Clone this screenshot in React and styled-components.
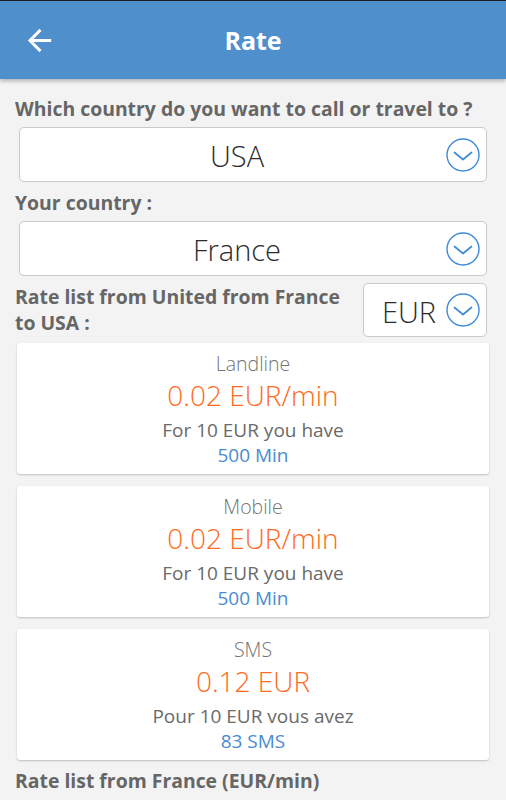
import React from "react";
import styled, { createGlobalStyle } from "styled-components";

const GlobalStyle = createGlobalStyle`
  html, body { margin: 0; padding: 0; }
  body {
    background: #f3f3f3;
    font-family: "Open Sans", "Liberation Sans", sans-serif;
    -webkit-font-smoothing: antialiased;
  }
`;

const Page = styled.div`
  width: 506px;
  min-height: 800px;
  background: #f3f3f3;
  overflow: hidden;
`;

const Header = styled.header`
  height: 78px;
  border-top: 1px solid #1e1e1e;
  background: #4f8fcc;
  box-shadow: 0 2px 4px rgba(0, 0, 0, 0.28);
  display: grid;
  grid-template-columns: 1fr auto 1fr;
  align-items: center;
  position: relative;
  z-index: 1;
`;

const BackButton = styled.button`
  justify-self: start;
  margin-left: 22px;
  width: 35px;
  height: 35px;
  padding: 0;
  border: none;
  background: transparent;
  display: flex;
  align-items: center;
  justify-content: center;
`;

const Title = styled.h1`
  margin: 0;
  color: #fff;
  font-size: 25px;
  font-weight: 700;
  line-height: 30px;
`;

const Content = styled.main`
  padding: 0 15px;
  display: flex;
  flex-direction: column;
`;

const Label = styled.div`
  margin-top: ${(p) => p.$mt}px;
  color: #666;
  font-size: 19.4px;
  font-weight: 700;
  line-height: 23px;
  white-space: nowrap;
`;

const SelectBox = styled.div`
  margin: ${(p) => p.$mt}px ${(p) => (p.$compact ? 0 : 4)}px 0;
  height: ${(p) => p.$h}px;
  box-sizing: border-box;
  background: #fff;
  border: 1px solid #c9c9c9;
  border-radius: 5px;
  display: flex;
  align-items: center;
  padding-right: 6px;
  flex-shrink: 0;
  ${(p) => (p.$compact ? "width: 124px;" : "")}
`;

const SelectValue = styled.span`
  flex: 1;
  text-align: center;
  padding: 3px 0 0 8px;
  font-size: 29px;
  font-weight: 300;
  color: #2b2b2b;
  line-height: 34px;
`;

const Row = styled.div`
  margin: 7px 4px 0 0;
  display: flex;
  align-items: flex-start;
  gap: 8px;
`;

const RowLabel = styled.div`
  flex: 1;
  padding-top: 1px;
  color: #666;
  font-size: 19.4px;
  font-weight: 700;
  line-height: 26px;
`;

const Card = styled.section`
  margin: ${(p) => p.$mt}px 2px 0;
  background: #fff;
  border-radius: 3px;
  box-shadow: 0 1px 2px rgba(0, 0, 0, 0.22);
  padding: 9px 0 7px;
  display: flex;
  flex-direction: column;
  align-items: center;
  text-align: center;
`;

const CardType = styled.div`
  font-size: 19.5px;
  font-weight: 300;
  color: #747474;
  line-height: 24px;
`;

const Price = styled.div`
  margin-top: 2px;
  font-size: 28px;
  font-weight: 300;
  color: #ff6a1c;
  line-height: 34px;
`;

const Info = styled.div`
  margin-top: 6px;
  font-size: 19px;
  font-weight: 400;
  color: #6a6a6a;
  line-height: 24px;
`;

const Amount = styled.div`
  margin-top: 1px;
  font-size: 19px;
  font-weight: 400;
  color: #4b8bd0;
  line-height: 24px;
`;

const ArrowBack = () => (
  <svg width="35" height="35" viewBox="0 0 24 24" fill="#fff">
    <path d="M20 11H7.83l5.59-5.59L12 4l-8 8 8 8 1.41-1.41L7.83 13H20v-2z" />
  </svg>
);

const ChevronCircle = () => (
  <svg width="34" height="34" viewBox="0 0 34 34" fill="none">
    <circle cx="17" cy="17" r="16" stroke="#3f8bd8" strokeWidth="1.4" />
    <polyline
      points="8.5,14.5 17,21.5 25.5,14.5"
      stroke="#3f8bd8"
      strokeWidth="1.7"
      strokeLinecap="round"
      strokeLinejoin="round"
    />
  </svg>
);

const Select = ({ value, mt = 0, h = 55, compact }) => (
  <SelectBox $mt={mt} $h={h} $compact={compact}>
    <SelectValue>{value}</SelectValue>
    <ChevronCircle />
  </SelectBox>
);

const RateCard = ({ mt, type, price, info, amount }) => (
  <Card $mt={mt}>
    <CardType>{type}</CardType>
    <Price>{price}</Price>
    <Info>{info}</Info>
    <Amount>{amount}</Amount>
  </Card>
);

export default function App() {
  return (
    <Page>
      <GlobalStyle />
      <Header>
        <BackButton aria-label="Back">
          <ArrowBack />
        </BackButton>
        <Title>Rate</Title>
        <span />
      </Header>
      <Content>
        <Label $mt={18}>Which country do you want to call or travel to ?</Label>
        <Select value="USA" mt={7} />
        <Label $mt={9}>Your country :</Label>
        <Select value="France" mt={7} />
        <Row>
          <RowLabel>Rate list from United from France to USA :</RowLabel>
          <Select value="EUR" h={54} compact />
        </Row>
        <RateCard
          mt={6}
          type="Landline"
          price="0.02 EUR/min"
          info="For 10 EUR you have"
          amount="500 Min"
        />
        <RateCard
          mt={12}
          type="Mobile"
          price="0.02 EUR/min"
          info="For 10 EUR you have"
          amount="500 Min"
        />
        <RateCard
          mt={12}
          type="SMS"
          price="0.12 EUR"
          info="Pour 10 EUR vous avez"
          amount="83 SMS"
        />
        <Label $mt={9}>Rate list from France (EUR/min)</Label>
      </Content>
    </Page>
  );
}
